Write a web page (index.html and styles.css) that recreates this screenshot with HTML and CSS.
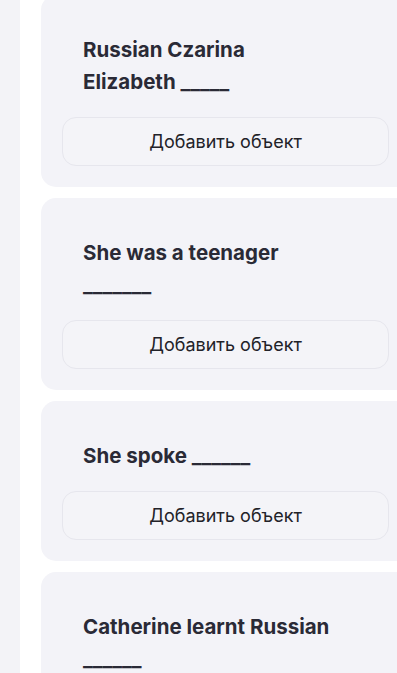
FILE: index.html
```html
<!DOCTYPE html>
<html lang="en">
<head>
    <meta charset="UTF-8">
    <meta name="viewport" content="width=device-width, initial-scale=1.0">
    <title>Quiz</title>
    <link rel="stylesheet" href="styles.css">
</head>
<body>
    <div class="page">
        <div class="side"></div>
        <div class="content">
            <div class="card first">
                <p class="question">Russian Czarina Elizabeth <span class="blank">_____</span></p>
                <button class="add-btn">Добавить объект</button>
            </div>

            <div class="card">
                <p class="question">She was a teenager <span class="blank">_______</span></p>
                <button class="add-btn">Добавить объект</button>
            </div>

            <div class="card">
                <p class="question">She spoke <span class="blank">______</span></p>
                <button class="add-btn">Добавить объект</button>
            </div>

            <div class="card">
                <p class="question">Catherine learnt Russian <span class="blank">______</span></p>
                <button class="add-btn">Добавить объект</button>
            </div>
        </div>
    </div>
</body>
</html>
```

FILE: styles.css
```css
html, body {
    margin: 0;
    height: 100%;
    overflow: hidden;
    background: #ffffff;
    font-family: Inter, "Noto Sans", sans-serif;
}
.page {
    display: flex;
    min-height: 100%;
}
.side {
    width: 20px;
    flex-shrink: 0;
    background: #f3f3f7;
}
.content {
    display: flex;
    flex-direction: column;
    gap: 11px;
    padding-left: 21px;
}
.card {
    width: 369px;
    box-sizing: border-box;
    background: #f3f3f8;
    border-radius: 15px;
    padding: 39px 21px 21px;
    display: flex;
    flex-direction: column;
    gap: 19px;
}
.card.first {
    margin-top: -5px;
}
.question {
    margin: 0 21px;
    max-width: 258px;
    font-size: 20.5px;
    line-height: 32px;
    font-weight: 700;
    color: #2a2a36;
}
.blank {
    white-space: nowrap;
}
.add-btn {
    height: 49px;
    width: 100%;
    background: #f4f4f8;
    border: 1px solid #e6e6ed;
    border-radius: 14px;
    font-family: Inter, "Noto Sans", sans-serif;
    font-size: 18px;
    color: #222228;
    cursor: pointer;
}
```
